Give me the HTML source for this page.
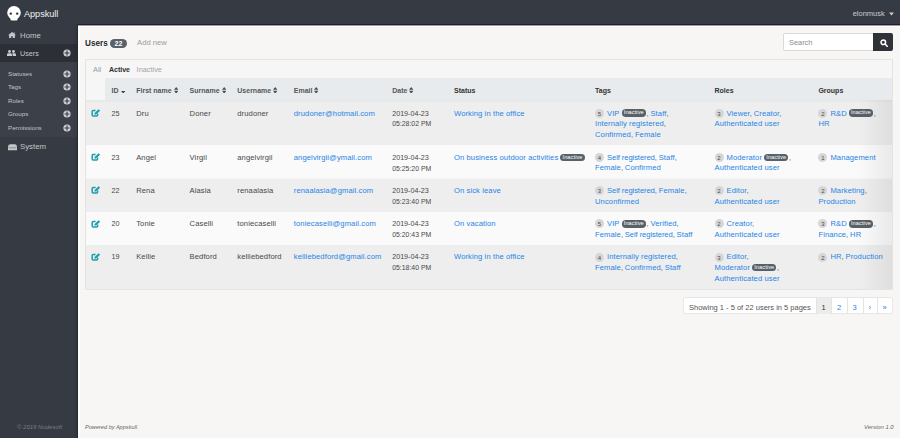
<!DOCTYPE html><html><head><meta charset="utf-8"><style>
*{box-sizing:border-box;margin:0;padding:0}
html,body{width:900px;height:438px;overflow:hidden}
body{position:relative;background:#f7f6f4;font-family:"Liberation Sans", sans-serif;color:#484848;font-size:7.6px;line-height:1}
.abs{position:absolute;white-space:nowrap}
.t{position:absolute;white-space:nowrap;line-height:10px;letter-spacing:0.1px}
a{color:#2684e6;text-decoration:none}
.cnt{display:inline-block;width:9px;height:9px;border-radius:50%;background:#d6d6d6;color:#4a4a4a;font-size:6px;letter-spacing:0;line-height:10.4px;text-align:center;vertical-align:middle;margin-right:3px;position:relative;top:-0.2px}
.ina{display:inline-block;height:7.5px;padding:0 2.2px;border-radius:3.75px;background:#586068;color:#fff;font-size:5.6px;letter-spacing:0.1px;line-height:7.5px;vertical-align:middle;margin:0 0.5px 0 2px;position:relative;top:-0.3px}
.cm{color:#555;margin-right:-0.5px}
</style></head><body>
<div class="abs" style="left:0;top:0;width:900px;height:24px;background:#363a42"></div>
<div class="abs" style="left:0;top:24px;width:78px;height:414px;background:#363a42"></div>
<div class="abs" style="left:78px;top:24px;width:822px;height:1px;background:#1d2128"></div>
<div class="abs" style="left:78px;top:25px;width:822px;height:1px;background:#9a9ca0"></div>
<div class="abs" style="left:78px;top:26px;width:822px;height:1px;background:#ffffff"></div>
<div class="abs" style="left:0;top:44px;width:78px;height:18.4px;background:#2c2f35"></div>
<div class="abs" style="left:0;top:62px;width:78px;height:75px;background:#3c4048"></div>
<svg class="abs" style="left:7px;top:5.5px" width="14" height="15" viewBox="0 0 14 15"><circle cx="7" cy="6.8" r="6.8" fill="#fff"/><rect x="3.4" y="9" width="7.2" height="5.6" rx="1.6" fill="#fff"/><circle cx="3.8" cy="7.6" r="1.2" fill="#2a2e35"/><circle cx="10.2" cy="7.6" r="1.2" fill="#2a2e35"/></svg>
<div class="abs" style="left:24px;top:7.7px;font-size:9.1px;color:#f4f4f4;line-height:12px">Appskull</div>
<div class="abs" style="left:852.7px;top:9px;font-size:7.5px;color:#c9cbce;line-height:10px">elonmusk</div>
<svg class="abs" style="left:888.6px;top:11.6px" width="5" height="4" viewBox="0 0 5 4"><path d="M0 0.5h5L2.5 3.5z" fill="#c9cbce"/></svg>
<svg class="abs" style="left:7.5px;top:32.4px" width="8" height="6" viewBox="0 0 8 6"><path d="M4 0L0 3.2h1.1V6h2.1V4.2h1.6V6h2.1V3.2H8z" fill="#c4c7cb"/><rect x="5.6" y="0.4" width="1" height="1.8" fill="#c4c7cb"/></svg>
<div class="abs" style="left:20px;top:30.6px;font-size:7.8px;color:#c3c6ca;line-height:10px">Home</div>
<svg class="abs" style="left:7.3px;top:50px" width="9" height="6" viewBox="0 0 9 6"><circle cx="2.5" cy="1.5" r="1.45" fill="#c9cbce"/><circle cx="6.5" cy="1.5" r="1.45" fill="#c9cbce"/><path d="M0 6V4.6Q0 3.3 1.4 3.3H3.6Q5 3.3 5 4.6V6z" fill="#c9cbce"/><path d="M5.6 6V4.4Q5.6 3.8 5.2 3.3H7.6Q9 3.3 9 4.6V6z" fill="#c9cbce"/></svg>
<div class="abs" style="left:20px;top:48.5px;font-size:7.2px;color:#c3c6ca;line-height:10px">Users</div>
<svg class="abs" style="left:63.3px;top:49.2px" width="8" height="8" viewBox="0 0 8 8"><circle cx="4" cy="4" r="3.6" fill="#cfd1d4"/><path d="M4 1.5v5M1.5 4h5" stroke="#3a3e45" stroke-width="1.2"/></svg>
<div class="abs" style="left:8px;top:68.8px;font-size:6.2px;color:#c2c4c8;line-height:10px">Statuses</div>
<svg class="abs" style="left:63.3px;top:69.5px" width="8" height="8" viewBox="0 0 8 8"><circle cx="4" cy="4" r="3.6" fill="#cfd1d4"/><path d="M4 1.5v5M1.5 4h5" stroke="#3a3e45" stroke-width="1.2"/></svg>
<div class="abs" style="left:8px;top:82.35px;font-size:6.2px;color:#c2c4c8;line-height:10px">Tags</div>
<svg class="abs" style="left:63.3px;top:83.05px" width="8" height="8" viewBox="0 0 8 8"><circle cx="4" cy="4" r="3.6" fill="#cfd1d4"/><path d="M4 1.5v5M1.5 4h5" stroke="#3a3e45" stroke-width="1.2"/></svg>
<div class="abs" style="left:8px;top:95.9px;font-size:6.2px;color:#c2c4c8;line-height:10px">Roles</div>
<svg class="abs" style="left:63.3px;top:96.60000000000001px" width="8" height="8" viewBox="0 0 8 8"><circle cx="4" cy="4" r="3.6" fill="#cfd1d4"/><path d="M4 1.5v5M1.5 4h5" stroke="#3a3e45" stroke-width="1.2"/></svg>
<div class="abs" style="left:8px;top:109.45px;font-size:6.2px;color:#c2c4c8;line-height:10px">Groups</div>
<svg class="abs" style="left:63.3px;top:110.15px" width="8" height="8" viewBox="0 0 8 8"><circle cx="4" cy="4" r="3.6" fill="#cfd1d4"/><path d="M4 1.5v5M1.5 4h5" stroke="#3a3e45" stroke-width="1.2"/></svg>
<div class="abs" style="left:8px;top:123.0px;font-size:6.2px;color:#c2c4c8;line-height:10px">Permissions</div>
<svg class="abs" style="left:63.3px;top:123.7px" width="8" height="8" viewBox="0 0 8 8"><circle cx="4" cy="4" r="3.6" fill="#cfd1d4"/><path d="M4 1.5v5M1.5 4h5" stroke="#3a3e45" stroke-width="1.2"/></svg>
<svg class="abs" style="left:7.8px;top:144px" width="9" height="6.5" viewBox="0 0 9 6.5"><path d="M0 6.2V3.2Q0 0.3 2.5 0.3H6.5Q9 0.3 9 3.2V6.2z" fill="#c4c6c9"/><rect x="0.8" y="3.4" width="7.4" height="0.8" fill="#7b7e83"/></svg>
<div class="abs" style="left:20px;top:142px;font-size:7.8px;color:#c3c6ca;line-height:10px">System</div>
<div class="abs" style="left:17px;top:423px;font-size:6px;color:#7b7f85;font-style:italic;line-height:8px">© 2019 Nudesoft</div>
<div class="abs" style="left:85px;top:423px;font-size:5.6px;color:#666;font-style:italic;line-height:8px">Powered by Appskull.</div>
<div class="abs" style="left:864px;top:423px;font-size:5.9px;color:#666;font-style:italic;line-height:8px">Version 1.0</div>
<div class="abs" style="left:85px;top:37px;font-size:9.4px;font-weight:bold;color:#2a2a2a;line-height:11px;transform:scaleX(0.87);transform-origin:0 0">Users</div>
<div class="abs" style="left:110px;top:38.5px;width:17px;height:9px;border-radius:4.5px;background:#5a6068;color:#fff;font-size:7px;font-weight:bold;line-height:9.5px;text-align:center">22</div>
<div class="abs" style="left:137px;top:38px;font-size:7.7px;color:#9b9b9b;line-height:10px">Add new</div>
<div class="abs" style="left:783px;top:33px;width:91px;height:18px;background:#fff;border:1px solid #dadada;border-right:none;border-radius:2px 0 0 2px"></div>
<div class="abs" style="left:789px;top:38px;font-size:7.4px;color:#8a8a8a;line-height:10px">Search</div>
<div class="abs" style="left:873px;top:33px;width:20px;height:18px;background:#2f3338;border-radius:0 2px 2px 0"></div>
<svg class="abs" style="left:879.5px;top:38.5px" width="8" height="8" viewBox="0 0 8 8"><circle cx="3.3" cy="3.3" r="2.3" fill="none" stroke="#fff" stroke-width="1.5"/><path d="M5 5L7.2 7.2" stroke="#fff" stroke-width="1.6" stroke-linecap="round"/></svg>
<div class="abs" style="left:85px;top:59px;width:808px;height:231px;background:#f6f6f6;border:1px solid #e4e4e4"></div>
<div class="abs" style="left:93px;top:66px;font-size:7.4px;color:#9a9a9a;line-height:8px">All</div>
<div class="abs" style="left:109px;top:66px;font-size:7px;font-weight:bold;color:#2e2e2e;line-height:8px">Active</div>
<div class="abs" style="left:136.6px;top:66px;font-size:7.37px;color:#a5a5a5;line-height:8px">Inactive</div>
<div class="abs" style="left:105.4px;top:78.4px;width:786.6px;height:22px;background:#e8ebee"></div>
<div class="abs" style="left:111.6px;top:85.5px;font-size:7.0px;font-weight:bold;color:#565656;line-height:10px">ID</div>
<div class="abs" style="left:136.2px;top:85.5px;font-size:7.0px;font-weight:bold;color:#565656;line-height:10px">First name<svg style="margin-left:2px;vertical-align:-0.8px" width="4.4" height="6.6" viewBox="0 0 4.4 6.6"><path d="M0 2.8L2.2 0l2.2 2.8zM0 3.8L2.2 6.6l2.2-2.8z" fill="#4a4a4a"/></svg></div>
<div class="abs" style="left:189.6px;top:85.5px;font-size:7.0px;font-weight:bold;color:#565656;line-height:10px">Surname<svg style="margin-left:2px;vertical-align:-0.8px" width="4.4" height="6.6" viewBox="0 0 4.4 6.6"><path d="M0 2.8L2.2 0l2.2 2.8zM0 3.8L2.2 6.6l2.2-2.8z" fill="#4a4a4a"/></svg></div>
<div class="abs" style="left:237.3px;top:85.5px;font-size:7.0px;font-weight:bold;color:#565656;line-height:10px">Username<svg style="margin-left:2px;vertical-align:-0.8px" width="4.4" height="6.6" viewBox="0 0 4.4 6.6"><path d="M0 2.8L2.2 0l2.2 2.8zM0 3.8L2.2 6.6l2.2-2.8z" fill="#4a4a4a"/></svg></div>
<div class="abs" style="left:293.8px;top:85.5px;font-size:7.0px;font-weight:bold;color:#565656;line-height:10px">Email<svg style="margin-left:2px;vertical-align:-0.8px" width="4.4" height="6.6" viewBox="0 0 4.4 6.6"><path d="M0 2.8L2.2 0l2.2 2.8zM0 3.8L2.2 6.6l2.2-2.8z" fill="#4a4a4a"/></svg></div>
<div class="abs" style="left:392.2px;top:85.5px;font-size:7.0px;font-weight:bold;color:#565656;line-height:10px">Date<svg style="margin-left:2px;vertical-align:-0.8px" width="4.4" height="6.6" viewBox="0 0 4.4 6.6"><path d="M0 2.8L2.2 0l2.2 2.8zM0 3.8L2.2 6.6l2.2-2.8z" fill="#4a4a4a"/></svg></div>
<div class="abs" style="left:454px;top:85.5px;font-size:7.0px;font-weight:bold;color:#333;line-height:10px">Status</div>
<div class="abs" style="left:595px;top:85.5px;font-size:7.0px;font-weight:bold;color:#333;line-height:10px">Tags</div>
<div class="abs" style="left:714.5px;top:85.5px;font-size:7.0px;font-weight:bold;color:#333;line-height:10px">Roles</div>
<div class="abs" style="left:818.4px;top:85.5px;font-size:7.0px;font-weight:bold;color:#333;line-height:10px">Groups</div>
<svg class="abs" style="left:121px;top:90.5px" width="4.4" height="2.6" viewBox="0 0 4.4 2.6"><path d="M0 0h4.4L2.2 2.6z" fill="#4a4a4a"/></svg>
<div class="abs" style="left:86px;top:100.4px;width:806px;height:44.8px;background:#eeeeee"></div>
<svg class="abs" style="left:91px;top:108.9px" width="10" height="8" viewBox="0 0 10 8"><path d="M4.6 1.6H2.2Q1.2 1.6 1.2 2.6V6Q1.2 7 2.2 7H5.6Q6.6 7 6.6 6V4.6" fill="none" stroke="#1a9dab" stroke-width="1.5"/><path d="M3.4 5.6L3.6 4.1 7.6 0.3 9.1 1.7 5 5.5z" fill="#1a9dab"/></svg>
<div class="t" style="left:111.6px;top:108.5px;font-size:7.2px;letter-spacing:0">25</div>
<div class="t" style="left:136.2px;top:108.5px;">Dru</div>
<div class="t" style="left:189.6px;top:108.5px;">Doner</div>
<div class="t" style="left:237.3px;top:108.5px;">drudoner</div>
<div class="t" style="left:293.8px;top:108.5px;"><a>drudoner@hotmail.com</a></div>
<div class="t" style="left:392.2px;top:108.5px;font-size:7.15px;letter-spacing:0;top:108.6px">2019-04-23</div>
<div class="t" style="left:392.2px;top:108.5px;font-size:6.9px;letter-spacing:0;top:119.4px">05:28:02 PM</div>
<div class="t" style="left:454px;top:108.5px;"><a>Working in the office</a></div>
<div class="t" style="left:595px;top:108.5px;"><span class="cnt">5</span><a>VIP</a><span class="ina">Inactive</span><span class="cm">,</span> <a>Staff</a><span class="cm">,</span></div>
<div class="t" style="left:595px;top:119.2px;"><a>Internally registered</a><span class="cm">,</span></div>
<div class="t" style="left:595px;top:129.9px;"><a>Confirmed</a><span class="cm">,</span> <a>Female</a></div>
<div class="t" style="left:714.5px;top:108.5px;"><span class="cnt">3</span><a>Viewer</a><span class="cm">,</span> <a>Creator</a><span class="cm">,</span></div>
<div class="t" style="left:714.5px;top:119.2px;"><a>Authenticated user</a></div>
<div class="t" style="left:818.4px;top:108.5px;"><span class="cnt">2</span><a>R&amp;D</a><span class="ina">Inactive</span><span class="cm">,</span></div>
<div class="t" style="left:818.4px;top:119.2px;"><a>HR</a></div>
<div class="abs" style="left:86px;top:145.2px;width:806px;height:33.3px;background:#fafafa"></div>
<svg class="abs" style="left:91px;top:153.1px" width="10" height="8" viewBox="0 0 10 8"><path d="M4.6 1.6H2.2Q1.2 1.6 1.2 2.6V6Q1.2 7 2.2 7H5.6Q6.6 7 6.6 6V4.6" fill="none" stroke="#1a9dab" stroke-width="1.5"/><path d="M3.4 5.6L3.6 4.1 7.6 0.3 9.1 1.7 5 5.5z" fill="#1a9dab"/></svg>
<div class="t" style="left:111.6px;top:152.7px;font-size:7.2px;letter-spacing:0">23</div>
<div class="t" style="left:136.2px;top:152.7px;">Angel</div>
<div class="t" style="left:189.6px;top:152.7px;">Virgil</div>
<div class="t" style="left:237.3px;top:152.7px;">angelvirgil</div>
<div class="t" style="left:293.8px;top:152.7px;"><a>angelvirgil@ymail.com</a></div>
<div class="t" style="left:392.2px;top:152.7px;font-size:7.15px;letter-spacing:0;top:152.79999999999998px">2019-04-23</div>
<div class="t" style="left:392.2px;top:152.7px;font-size:6.9px;letter-spacing:0;top:163.59999999999997px">05:25:20 PM</div>
<div class="t" style="left:454px;top:152.7px;"><a>On business outdoor activities</a><span class="ina">Inactive</span></div>
<div class="t" style="left:595px;top:152.7px;"><span class="cnt">4</span><a style="letter-spacing:-0.08px">Self registered</a><span class="cm">,</span> <a>Staff</a><span class="cm">,</span></div>
<div class="t" style="left:595px;top:163.39999999999998px;"><a>Female</a><span class="cm">,</span> <a>Confirmed</a></div>
<div class="t" style="left:714.5px;top:152.7px;"><span class="cnt">2</span><a>Moderator</a><span class="ina">Inactive</span><span class="cm">,</span></div>
<div class="t" style="left:714.5px;top:163.39999999999998px;"><a>Authenticated user</a></div>
<div class="t" style="left:818.4px;top:152.7px;"><span class="cnt">1</span><a>Management</a></div>
<div class="abs" style="left:86px;top:178.5px;width:806px;height:33.2px;background:#eeeeee"></div>
<svg class="abs" style="left:91px;top:186.3px" width="10" height="8" viewBox="0 0 10 8"><path d="M4.6 1.6H2.2Q1.2 1.6 1.2 2.6V6Q1.2 7 2.2 7H5.6Q6.6 7 6.6 6V4.6" fill="none" stroke="#1a9dab" stroke-width="1.5"/><path d="M3.4 5.6L3.6 4.1 7.6 0.3 9.1 1.7 5 5.5z" fill="#1a9dab"/></svg>
<div class="t" style="left:111.6px;top:185.9px;font-size:7.2px;letter-spacing:0">22</div>
<div class="t" style="left:136.2px;top:185.9px;">Rena</div>
<div class="t" style="left:189.6px;top:185.9px;">Alasia</div>
<div class="t" style="left:237.3px;top:185.9px;">renaalasia</div>
<div class="t" style="left:293.8px;top:185.9px;"><a>renaalasia@gmail.com</a></div>
<div class="t" style="left:392.2px;top:185.9px;font-size:7.15px;letter-spacing:0;top:186.0px">2019-04-23</div>
<div class="t" style="left:392.2px;top:185.9px;font-size:6.9px;letter-spacing:0;top:196.79999999999998px">05:23:40 PM</div>
<div class="t" style="left:454px;top:185.9px;"><a>On sick leave</a></div>
<div class="t" style="left:595px;top:185.9px;"><span class="cnt">3</span><a style="letter-spacing:-0.08px">Self registered</a><span class="cm">,</span> <a>Female</a><span class="cm">,</span></div>
<div class="t" style="left:595px;top:196.6px;"><a>Unconfirmed</a></div>
<div class="t" style="left:714.5px;top:185.9px;"><span class="cnt">2</span><a>Editor</a><span class="cm">,</span></div>
<div class="t" style="left:714.5px;top:196.6px;"><a>Authenticated user</a></div>
<div class="t" style="left:818.4px;top:185.9px;"><span class="cnt">2</span><a>Marketing</a><span class="cm">,</span></div>
<div class="t" style="left:818.4px;top:196.6px;"><a>Production</a></div>
<div class="abs" style="left:86px;top:211.7px;width:806px;height:33.2px;background:#fafafa"></div>
<svg class="abs" style="left:91px;top:219.5px" width="10" height="8" viewBox="0 0 10 8"><path d="M4.6 1.6H2.2Q1.2 1.6 1.2 2.6V6Q1.2 7 2.2 7H5.6Q6.6 7 6.6 6V4.6" fill="none" stroke="#1a9dab" stroke-width="1.5"/><path d="M3.4 5.6L3.6 4.1 7.6 0.3 9.1 1.7 5 5.5z" fill="#1a9dab"/></svg>
<div class="t" style="left:111.6px;top:219.1px;font-size:7.2px;letter-spacing:0">20</div>
<div class="t" style="left:136.2px;top:219.1px;">Tonie</div>
<div class="t" style="left:189.6px;top:219.1px;">Caselli</div>
<div class="t" style="left:237.3px;top:219.1px;">toniecaselli</div>
<div class="t" style="left:293.8px;top:219.1px;"><a>toniecaselli@gmail.com</a></div>
<div class="t" style="left:392.2px;top:219.1px;font-size:7.15px;letter-spacing:0;top:219.2px">2019-04-23</div>
<div class="t" style="left:392.2px;top:219.1px;font-size:6.9px;letter-spacing:0;top:229.99999999999997px">05:20:43 PM</div>
<div class="t" style="left:454px;top:219.1px;"><a>On vacation</a></div>
<div class="t" style="left:595px;top:219.1px;"><span class="cnt">5</span><a>VIP</a><span class="ina">Inactive</span><span class="cm">,</span> <a>Verified</a><span class="cm">,</span></div>
<div class="t" style="left:595px;top:229.79999999999998px;"><a>Female</a><span class="cm">,</span> <a style="letter-spacing:-0.08px">Self registered</a><span class="cm">,</span> <a>Staff</a></div>
<div class="t" style="left:714.5px;top:219.1px;"><span class="cnt">2</span><a>Creator</a><span class="cm">,</span></div>
<div class="t" style="left:714.5px;top:229.79999999999998px;"><a>Authenticated user</a></div>
<div class="t" style="left:818.4px;top:219.1px;"><span class="cnt">3</span><a>R&amp;D</a><span class="ina">Inactive</span><span class="cm">,</span></div>
<div class="t" style="left:818.4px;top:229.79999999999998px;"><a>Finance</a><span class="cm">,</span> <a>HR</a></div>
<div class="abs" style="left:86px;top:244.9px;width:806px;height:44.3px;background:#eeeeee"></div>
<svg class="abs" style="left:91px;top:252.6px" width="10" height="8" viewBox="0 0 10 8"><path d="M4.6 1.6H2.2Q1.2 1.6 1.2 2.6V6Q1.2 7 2.2 7H5.6Q6.6 7 6.6 6V4.6" fill="none" stroke="#1a9dab" stroke-width="1.5"/><path d="M3.4 5.6L3.6 4.1 7.6 0.3 9.1 1.7 5 5.5z" fill="#1a9dab"/></svg>
<div class="t" style="left:111.6px;top:252.2px;font-size:7.2px;letter-spacing:0">19</div>
<div class="t" style="left:136.2px;top:252.2px;">Kellie</div>
<div class="t" style="left:189.6px;top:252.2px;">Bedford</div>
<div class="t" style="left:237.3px;top:252.2px;">kelliebedford</div>
<div class="t" style="left:293.8px;top:252.2px;"><a>kelliebedford@gmail.com</a></div>
<div class="t" style="left:392.2px;top:252.2px;font-size:7.15px;letter-spacing:0;top:252.29999999999998px">2019-04-23</div>
<div class="t" style="left:392.2px;top:252.2px;font-size:6.9px;letter-spacing:0;top:263.09999999999997px">05:18:40 PM</div>
<div class="t" style="left:454px;top:252.2px;"><a>Working in the office</a></div>
<div class="t" style="left:595px;top:252.2px;"><span class="cnt">4</span><a>Internally registered</a><span class="cm">,</span></div>
<div class="t" style="left:595px;top:262.9px;"><a>Female</a><span class="cm">,</span> <a>Confirmed</a><span class="cm">,</span> <a>Staff</a></div>
<div class="t" style="left:714.5px;top:252.2px;"><span class="cnt">3</span><a>Editor</a><span class="cm">,</span></div>
<div class="t" style="left:714.5px;top:262.9px;"><a>Moderator</a><span class="ina">Inactive</span><span class="cm">,</span></div>
<div class="t" style="left:714.5px;top:273.59999999999997px;"><a>Authenticated user</a></div>
<div class="t" style="left:818.4px;top:252.2px;"><span class="cnt">2</span><a>HR</a><span class="cm">,</span> <a>Production</a></div>
<div class="abs" style="left:858px;top:100.4px;width:34px;height:188.8px;background:linear-gradient(to right,rgba(0,0,0,0),rgba(0,0,0,0.065))"></div>
<div class="abs" style="left:78px;top:26px;width:1.5px;height:412px;background:#fdfdfc"></div>
<div class="abs" style="left:77px;top:24px;width:1px;height:414px;background:#262a31"></div>
<div class="abs" style="left:74px;top:24px;width:3px;height:414px;background:rgba(0,0,0,0.04)"></div>
<div class="abs" style="left:86px;top:100.4px;width:806px;height:2.5px;background:linear-gradient(rgba(0,0,0,0.035),rgba(0,0,0,0))"></div>
<div class="abs" style="left:682.5px;top:297.3px;width:210px;height:17px;background:#fff;border:1px solid #e6e6e6;border-radius:2px"></div>
<div class="abs" style="left:816px;top:298px;width:15px;height:16px;background:#ececec"></div>
<div class="abs" style="left:816px;top:298px;width:1px;height:16px;background:#e4e4e4"></div>
<div class="abs" style="left:831px;top:298px;width:1px;height:16px;background:#e4e4e4"></div>
<div class="abs" style="left:847px;top:298px;width:1px;height:16px;background:#e4e4e4"></div>
<div class="abs" style="left:862.5px;top:298px;width:1px;height:16px;background:#e4e4e4"></div>
<div class="abs" style="left:877px;top:298px;width:1px;height:16px;background:#e4e4e4"></div>
<div class="abs" style="left:689px;top:302.5px;font-size:7.5px;color:#555;line-height:10px">Showing 1 - 5 of 22 users in 5 pages</div>
<div class="abs" style="left:816.5px;width:14px;text-align:center;top:302.5px;font-size:7.5px;color:#333;line-height:10px">1</div>
<div class="abs" style="left:832px;width:14px;text-align:center;top:302.5px;font-size:7.5px;color:#2684e6;line-height:10px">2</div>
<div class="abs" style="left:847.7px;width:14px;text-align:center;top:302.5px;font-size:7.5px;color:#2684e6;line-height:10px">3</div>
<div class="abs" style="left:862.7px;width:14px;text-align:center;top:302.5px;font-size:7.5px;color:#2684e6;line-height:10px">›</div>
<div class="abs" style="left:877.5px;width:14px;text-align:center;top:302.5px;font-size:7.5px;color:#2684e6;line-height:10px">»</div>
</body></html>
